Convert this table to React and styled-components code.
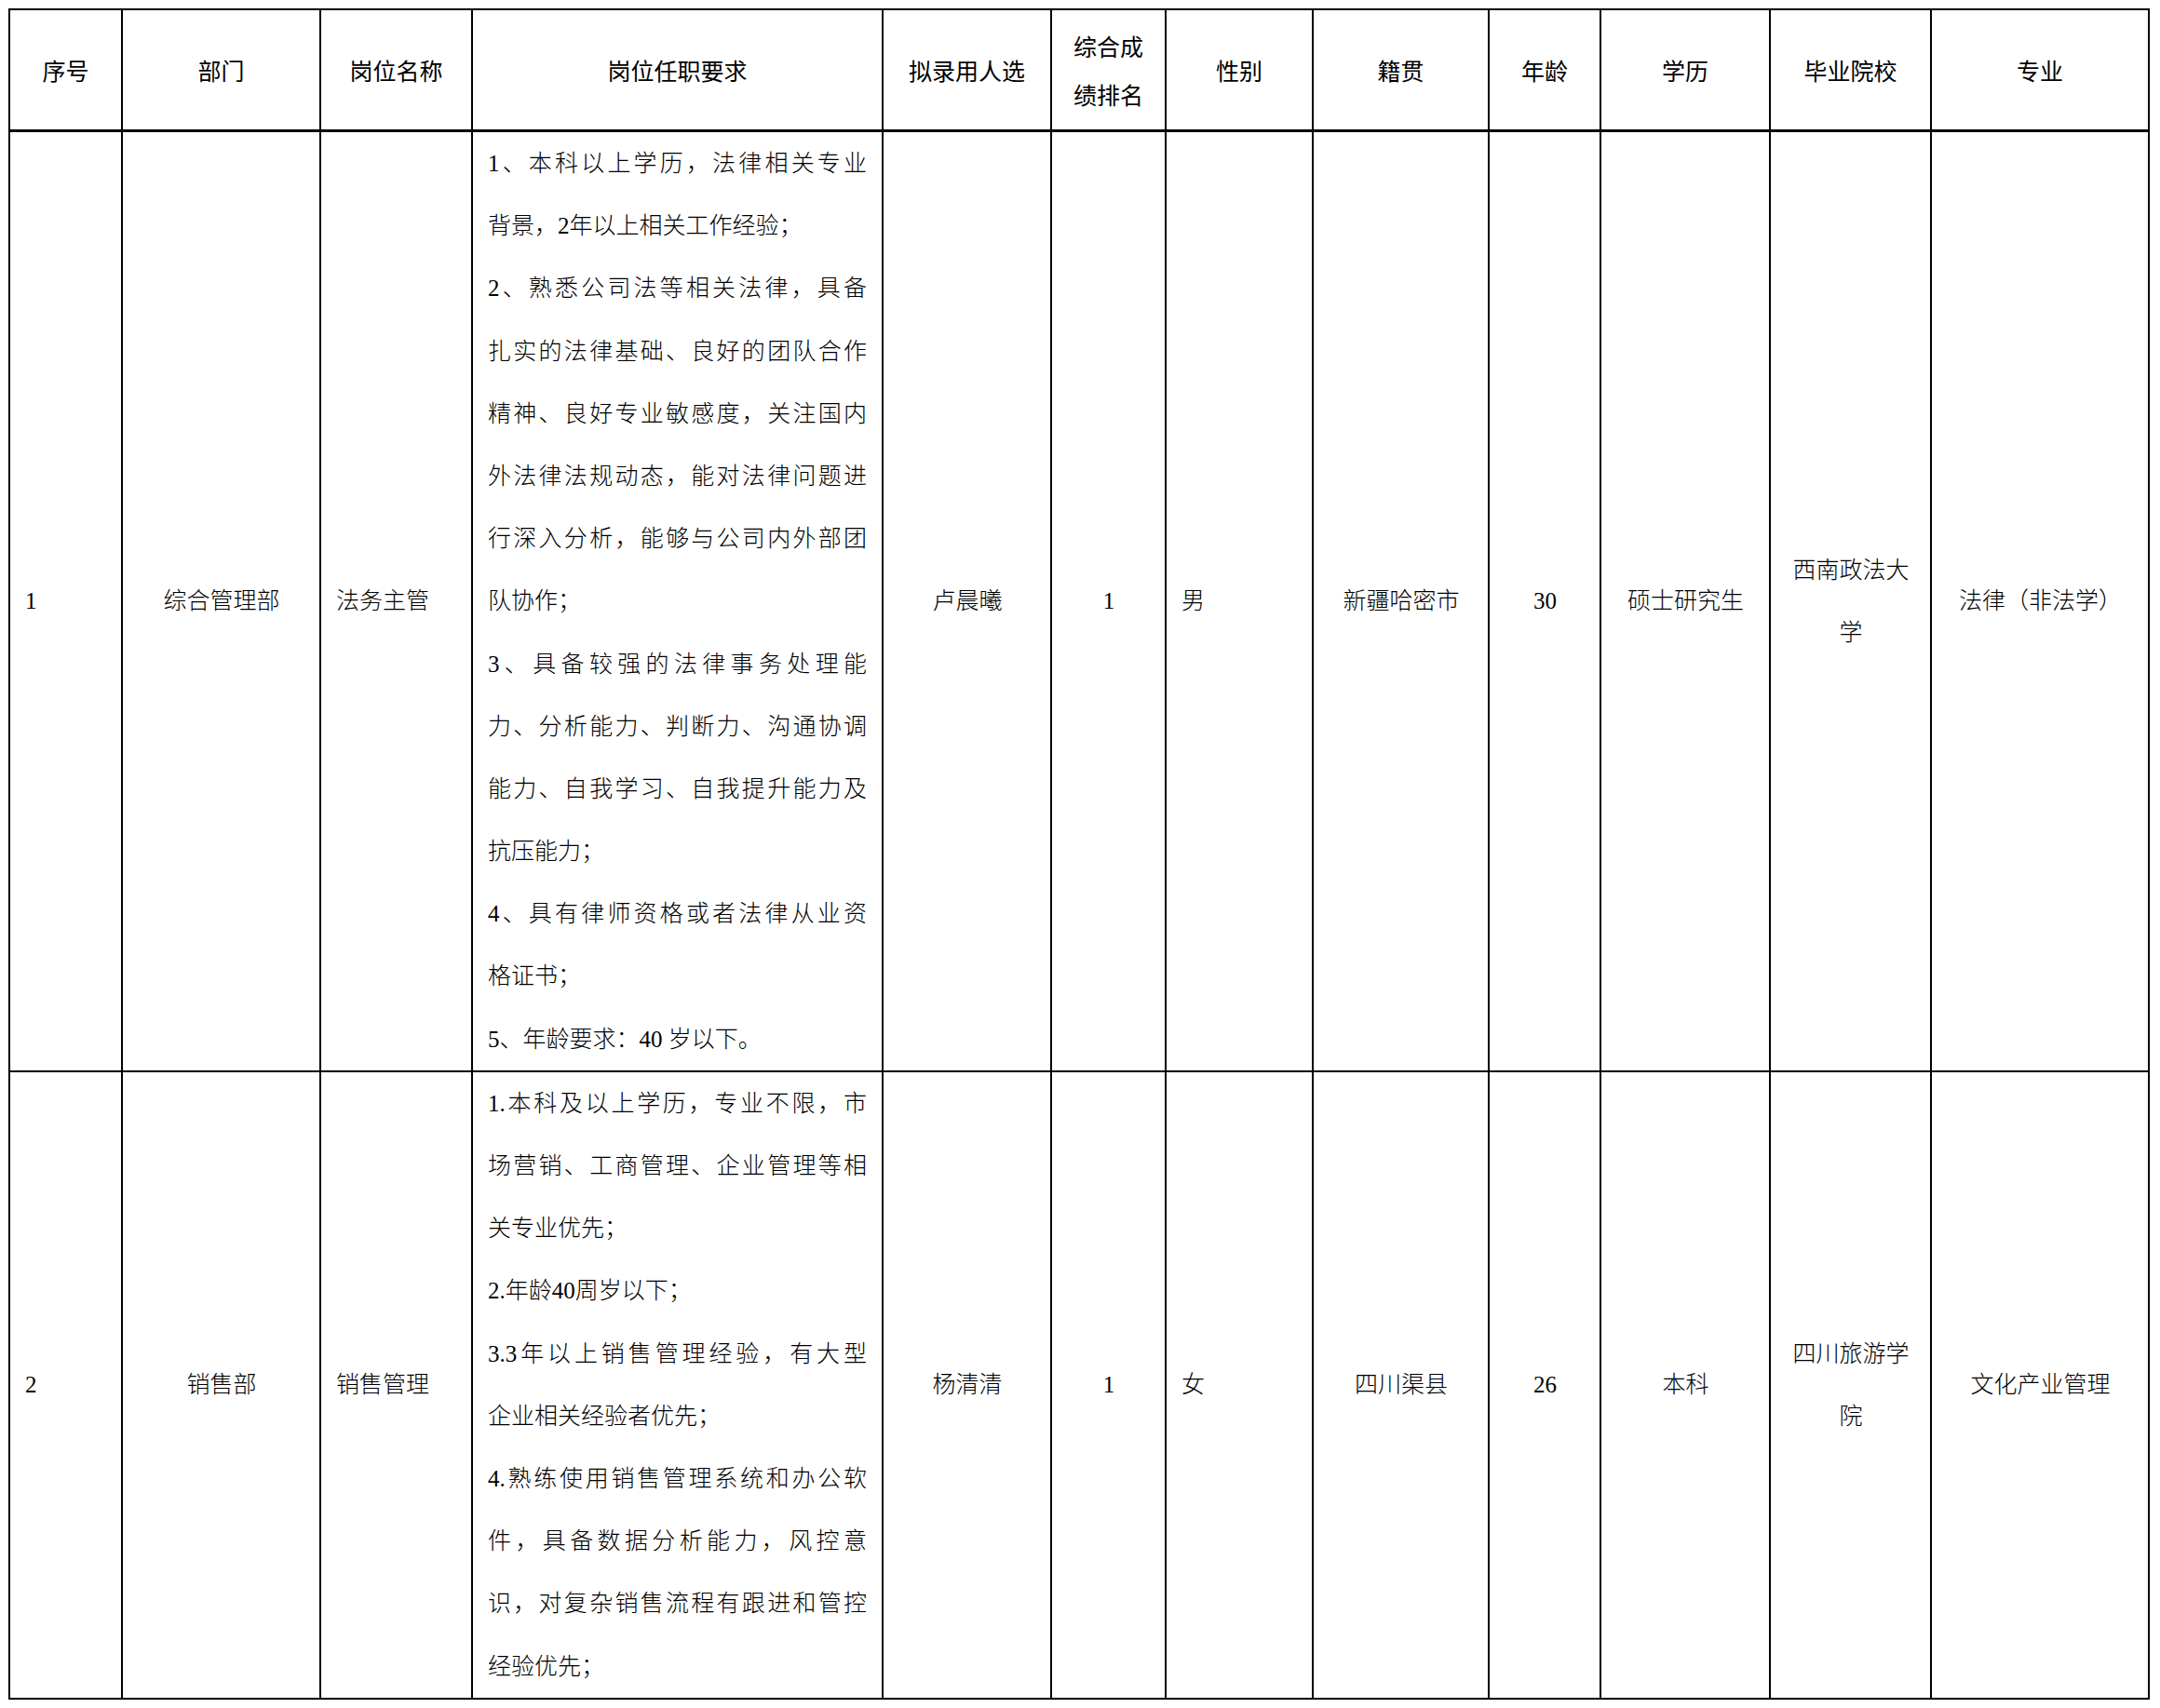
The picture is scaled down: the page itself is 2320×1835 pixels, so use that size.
import React from "react";
import styled, { createGlobalStyle } from "styled-components";

const GlobalStyle = createGlobalStyle`
  html, body {
    margin: 0;
    padding: 0;
    background: #ffffff;
  }
  body {
    font-family: "Liberation Serif", "Noto Sans CJK SC", serif;
    color: #000;
  }
`;

const columns = [121, 213, 163, 441, 181, 123, 158, 189, 120, 182, 173, 234];

const headers = [
  "序号",
  "部门",
  "岗位名称",
  "岗位任职要求",
  "拟录用人选",
  ["综合成", "绩排名"],
  "性别",
  "籍贯",
  "年龄",
  "学历",
  "毕业院校",
  "专业",
];

const rows = [
  {
    no: "1",
    dept: "综合管理部",
    post: "法务主管",
    req: [
      ["1、本科以上学历，法律相关专业", true],
      ["背景，2年以上相关工作经验；", false],
      ["2、熟悉公司法等相关法律，具备", true],
      ["扎实的法律基础、良好的团队合作", true],
      ["精神、良好专业敏感度，关注国内", true],
      ["外法律法规动态，能对法律问题进", true],
      ["行深入分析，能够与公司内外部团", true],
      ["队协作；", false],
      ["3、具备较强的法律事务处理能", true],
      ["力、分析能力、判断力、沟通协调", true],
      ["能力、自我学习、自我提升能力及", true],
      ["抗压能力；", false],
      ["4、具有律师资格或者法律从业资", true],
      ["格证书；", false],
      ["5、年龄要求：40 岁以下。", false],
    ],
    name: "卢晨曦",
    rank: "1",
    sex: "男",
    origin: "新疆哈密市",
    age: "30",
    edu: "硕士研究生",
    school: ["西南政法大", "学"],
    major: "法律（非法学）",
  },
  {
    no: "2",
    dept: "销售部",
    post: "销售管理",
    req: [
      ["1.本科及以上学历，专业不限，市", true],
      ["场营销、工商管理、企业管理等相", true],
      ["关专业优先；", false],
      ["2.年龄40周岁以下；", false],
      ["3.3年以上销售管理经验，有大型", true],
      ["企业相关经验者优先；", false],
      ["4.熟练使用销售管理系统和办公软", true],
      ["件，具备数据分析能力，风控意", true],
      ["识，对复杂销售流程有跟进和管控", true],
      ["经验优先；", false],
    ],
    name: "杨清清",
    rank: "1",
    sex: "女",
    origin: "四川渠县",
    age: "26",
    edu: "本科",
    school: ["四川旅游学", "院"],
    major: "文化产业管理",
  },
];

function App() {
  return (
    <Page>
      <GlobalStyle />
      <Table>
        <colgroup>
          {columns.map((w, i) => (
            <col key={i} style={{ width: w }} />
          ))}
        </colgroup>
        <thead>
          <tr>
            {headers.map((h, i) => (
              <HeadCell key={i}>
                {Array.isArray(h) ? (
                  <>
                    {h[0]}
                    <br />
                    {h[1]}
                  </>
                ) : (
                  h
                )}
              </HeadCell>
            ))}
          </tr>
        </thead>
        <tbody>
          {rows.map((r) => (
            <tr key={r.no}>
              <Cell $align="left">{r.no}</Cell>
              <Cell>{r.dept}</Cell>
              <Cell $align="left">{r.post}</Cell>
              <ReqCell>
                {r.req.map(([text, full], i) => (
                  <ReqLine key={i} $full={full}>
                    {text}
                  </ReqLine>
                ))}
              </ReqCell>
              <Cell>{r.name}</Cell>
              <Cell>{r.rank}</Cell>
              <Cell $align="left">{r.sex}</Cell>
              <Cell>{r.origin}</Cell>
              <Cell>{r.age}</Cell>
              <Cell>{r.edu}</Cell>
              <Cell>
                {r.school.map((s, i) => (
                  <CellLine key={i}>{s}</CellLine>
                ))}
              </Cell>
              <Cell>{r.major}</Cell>
            </tr>
          ))}
        </tbody>
      </Table>
    </Page>
  );
}

export default App;

const Page = styled.div`
  padding: 9px;
  width: 2320px;
  box-sizing: border-box;
`;

const Table = styled.table`
  width: 2300px;
  table-layout: fixed;
  border-collapse: collapse;
  border: 2px solid #000;
`;

const HeadCell = styled.th`
  height: 128px;
  padding: 0 10px;
  border: 2px solid #000;
  border-bottom-width: 3px;
  font-family: "Noto Sans CJK SC", sans-serif;
  font-weight: 400;
  font-size: 25px;
  line-height: 52px;
  text-align: center;
  vertical-align: middle;
`;

const Cell = styled.td`
  padding: 0 15px 0 16px;
  border: 2px solid #000;
  font-family: "Liberation Serif", "Noto Sans CJK SC", serif;
  font-weight: 300;
  font-size: 25px;
  line-height: 67px;
  text-align: ${(p) => p.$align || "center"};
  vertical-align: middle;
`;

const CellLine = styled.div`
  height: 67px;
`;

const ReqCell = styled.td`
  padding: 0 16px;
  border: 2px solid #000;
  font-family: "Liberation Serif", "Noto Sans CJK SC", serif;
  font-weight: 300;
  font-size: 25px;
  line-height: 67px;
  vertical-align: top;
`;

const ReqLine = styled.div`
  height: 67.2px;
  white-space: nowrap;
  text-align: ${(p) => (p.$full ? "justify" : "left")};
  text-align-last: ${(p) => (p.$full ? "justify" : "left")};
`;
